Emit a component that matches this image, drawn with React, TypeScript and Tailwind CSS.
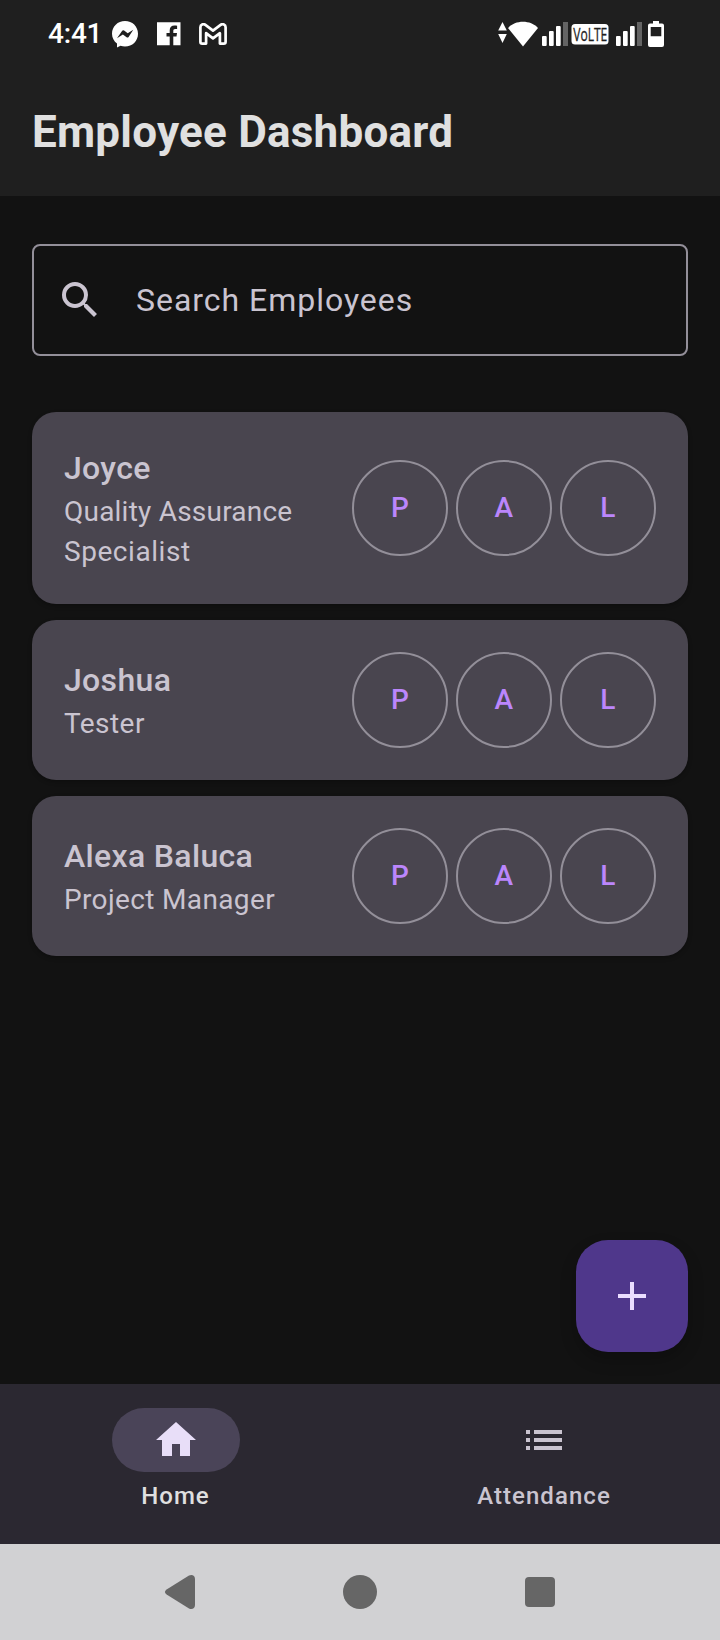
import React from "react";

type RoleLine = { text: string; tracking: string };
type Employee = { name: string; role: RoleLine[] };

const employees: Employee[] = [
  {
    name: "Joyce",
    role: [
      { text: "Quality Assurance", tracking: "tracking-[0.22px]" },
      { text: "Specialist", tracking: "tracking-[0.55px]" },
    ],
  },
  { name: "Joshua", role: [{ text: "Tester", tracking: "tracking-[0.45px]" }] },
  { name: "Alexa Baluca", role: [{ text: "Project Manager", tracking: "tracking-[0.36px]" }] },
];

function Signal() {
  return (
    <svg width="26" height="26" viewBox="0 0 26 26" fill="#fff">
      <rect x="0" y="15" width="4.700" height="10" rx="1" />
      <rect x="7" y="10" width="4.700" height="15" rx="1" />
      <rect x="14" y="5" width="4.700" height="20" rx="1" />
      <rect x="21" y="1" width="5" height="24" fill="#646464" />
    </svg>
  );
}

function StatusBar() {
  return (
    <div className="flex h-[68px] items-center justify-between pl-12 pr-14 text-white">
      <div className="flex items-center">
        <span className="w-[64px] text-[28px] leading-[34px] font-medium tracking-[-0.2px]">4:41</span>
        <svg width="26" height="27" viewBox="0 0 26 27">
          <path fill="#fff" d="M13 0C5.700 0 0 5.500 0 12.700c0 4.200 2 7.500 5 9.800v3.900l3.500-1.700c1.400.5 3 .8 4.500.8 7.300 0 13-5.500 13-12.800S20.300 0 13 0z" />
          <path fill="#1f1f1f" d="M5 17.200l5.200-7.400q.8-1.100 1.900-.3l3.600 2.700 5.600-3.500-4.700 7.200q-.8 1.200-2 .4l-3.700-2.700z" />
        </svg>
        <svg className="ml-[19px]" width="24" height="24" viewBox="0 0 24 24">
          <path fill="#fff" d="M0 .2h23.500v23H16.300v-8.800h3.200l.5-3.500h-3.700V8.900c0-1.200.5-1.900 1.900-1.900h1.900V3.800c-.6-.1-1.600-.2-2.600-.2-3 0-4.800 1.800-4.800 4.900v2.400H9.500v3.500h3.200v8.800H0z" />
        </svg>
        <svg className="ml-[18px]" width="28" height="22" viewBox="0 0 28 22" fill="none" stroke="#fff" strokeWidth="2.700" strokeLinejoin="round">
          <path d="M1.400 4.200v14.500c0 1.200.7 1.900 1.800 1.900h3.900V10.200l6.900 5.200 6.900-5.200v10.400h3.900c1.100 0 1.800-.7 1.800-1.900V4.200c0-2.700-3-3.800-5-2.300L14 7.600 6.400 1.900C4.400.4 1.400 1.500 1.400 4.200z" />
        </svg>
      </div>
      <div className="flex items-center">
        <svg width="41" height="26" viewBox="0 0 41 26" fill="#fff">
          <path d="M4.500 1l4.300 8.500H.2zM4.500 22L.2 13h8.600z" />
          <path d="M10 7C17.500-1.200 32.500-1.200 40 7L25 25.500z" />
        </svg>
        <span className="ml-[3px]"><Signal /></span>
        <svg className="ml-[3px] overflow-visible" width="38" height="30" viewBox="0 -4 38 30">
          <rect x=".5" y="1" width="37" height="20.500" rx="3.500" fill="#fff" />
          <g transform="translate(2.200 17.600) scale(.69 1)">
            <text x="0" y="0" fontFamily="'Open Sans', 'Noto Sans', sans-serif" fontSize="17.500" fill="#1f1f1f" stroke="#1f1f1f" strokeWidth=".3">VoLTE</text>
          </g>
        </svg>
        <span className="ml-[7px]"><Signal /></span>
        <svg className="ml-[6px]" width="16" height="26" viewBox="0 0 16 26">
          <path fill="#fff" fillRule="evenodd" d="M5 0h6v2.500h3q2 0 2 2V24q0 2-2 2H2q-2 0-2-2V4.500q0-2 2-2h3zM2.700 6v9.300h10.600V6z" />
        </svg>
      </div>
    </div>
  );
}

function EmployeeCard({ name, role }: Employee) {
  return (
    <article className="flex items-center justify-between rounded-[24px] bg-[#49454f] p-8 shadow-[0_2px_4px_rgba(0,0,0,0.25)]">
      <div className="w-[272px] text-[#cac4d0]">
        <h2 className="text-[32px] leading-[48px] font-medium tracking-[0.33px]">{name}</h2>
        <p className="text-[28px] leading-[40px]">
          {role.map((line) => (
            <span key={line.text} className={`block ${line.tracking}`}>{line.text}</span>
          ))}
        </p>
      </div>
      <div className="flex gap-2">
        {["P", "A", "L"].map((label) => (
          <button key={label} className="size-24 rounded-full border-2 border-[#938f99] text-[28px] leading-[40px] font-medium tracking-[0.2px] text-[#bb86fc]">
            {label}
          </button>
        ))}
      </div>
    </article>
  );
}

export default function App() {
  return (
    <div className="flex h-[1640px] w-[720px] flex-col bg-[#121212] font-['Roboto',sans-serif]">
      <header className="h-[196px] bg-[#1f1f1f]">
        <StatusBar />
        <h1 className="flex h-32 items-center px-8 text-[44px] leading-[56px] font-bold tracking-[0.23px] text-[#e0e0e0]">Employee Dashboard</h1>
      </header>
      <main className="flex flex-1 flex-col px-8 pt-12 pb-8">
        <div className="flex h-28 items-center rounded-[8px] border-2 border-[#938f99] pl-[22px]">
          <svg width="48" height="48" viewBox="0 0 24 24" fill="#cac4d0">
            <path d="M15.500 14h-.79l-.28-.27A6.471 6.471 0 0 0 16 9.500 6.500 6.500 0 1 0 9.500 16c1.610 0 3.090-.59 4.230-1.570l.27.28v.79l5 4.990L20.490 19l-4.990-5zm-6 0C7.010 14 5 11.990 5 9.500S7.010 5 9.500 5 14 7.010 14 9.500 11.990 14 9.500 14z" />
          </svg>
          <span className="ml-8 text-[32px] leading-[48px] tracking-[0.97px] text-[#cac4d0]">Search Employees</span>
        </div>
        <section className="mt-14 flex flex-col gap-4">
          {employees.map((e) => (
            <EmployeeCard key={e.name} {...e} />
          ))}
        </section>
        <button className="mt-auto flex size-28 items-center justify-center self-end rounded-[32px] bg-[#4f378b] shadow-[0_8px_16px_rgba(0,0,0,0.22)]">
          <svg width="48" height="48" viewBox="0 0 24 24" fill="#eaddff">
            <path d="M19 13h-6v6h-2v-6H5v-2h6V5h2v6h6v2z" />
          </svg>
        </button>
      </main>
      <nav className="flex h-40 gap-4 bg-[#2b2831] pt-6 text-[24px] leading-[32px] font-medium tracking-[1px]">
        <a className="flex flex-1 flex-col items-center gap-2 text-[#e0e0e0]">
          <span className="flex h-16 w-32 items-center justify-center rounded-full bg-[#4a4458]">
            <svg width="48" height="48" viewBox="0 0 24 24" fill="#e8def8">
              <path d="M10 20v-6h4v6h5v-8h3L12 3 2 12h3v8z" />
            </svg>
          </span>
          <span className="pr-[1px]">Home</span>
        </a>
        <a className="flex flex-1 flex-col items-center gap-2 text-[#cac4d0]">
          <span className="flex h-16 w-32 items-center justify-center">
            <svg width="48" height="48" viewBox="0 0 24 24" fill="#cac4d0">
              <path d="M3 13h2v-2H3v2zm0 4h2v-2H3v2zm0-8h2V7H3v2zm4 4h14v-2H7v2zm0 4h14v-2H7v2zM7 7v2h14V7H7z" />
            </svg>
          </span>
          <span className="tracking-[1.05px]">Attendance</span>
        </a>
      </nav>
      <footer className="flex h-24 items-center justify-between bg-[#d1d1d3] px-[162px]">
        <svg width="36" height="36" viewBox="0 0 36 36" fill="#666">
          <path d="M4.600 15.500L27 1.600c2.800-1.600 6-.1 6 3.400v26c0 3.500-3.200 5-6 3.400L4.600 20.500c-2.200-1.400-2.200-3.600 0-5z" />
        </svg>
        <svg width="36" height="36" viewBox="0 0 36 36" fill="#666">
          <circle cx="18" cy="18" r="17" />
        </svg>
        <svg width="36" height="36" viewBox="0 0 36 36" fill="#666">
          <rect x="3" y="3" width="30" height="30" rx="4" />
        </svg>
      </footer>
    </div>
  );
}
